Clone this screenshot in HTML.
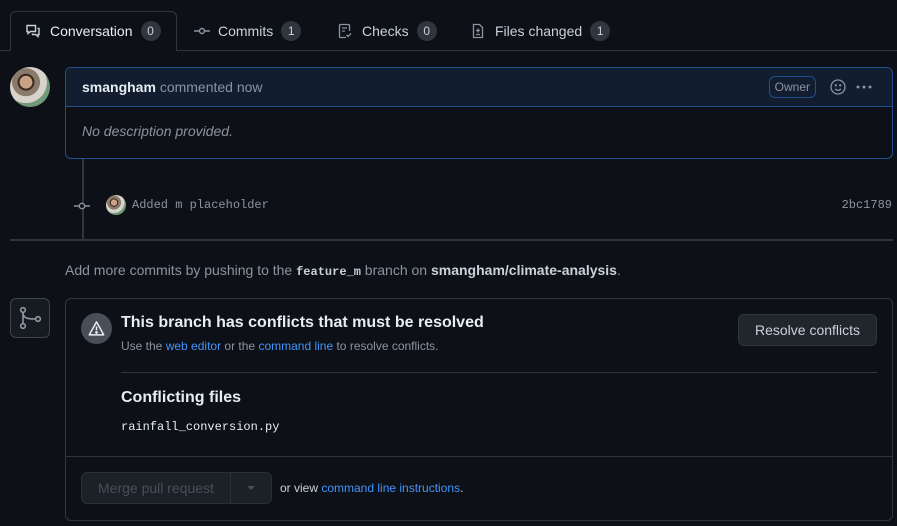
<!DOCTYPE html>
<html><head><meta charset="utf-8"><style>
*{margin:0;padding:0;box-sizing:border-box}
body{width:897px;height:526px;background:#0d1117;font-family:"Liberation Sans",sans-serif;color:#e6edf3;position:relative;overflow:hidden}
.a{position:absolute}
.tab{position:absolute;top:11px;height:40px;display:flex;align-items:center;font-size:14px;color:#c9d1d9}
.cnt{display:inline-block;background:#30363d;border-radius:10px;min-width:20px;height:20px;font-size:12px;line-height:20px;text-align:center;margin-left:8px;color:#c9d1d9}
.mono{font-family:"Liberation Mono",monospace}
a{color:#4493f8;text-decoration:none}
.av{border-radius:50%;background:radial-gradient(circle at 40% 38%,#c9a185 0 18%,#3a2a20 19% 24%,#8a7a6a 25% 40%,#d8d2cc 41% 60%,#6f9a7a 61%);overflow:hidden}
</style></head><body>
<!-- tabs -->
<div class="a" style="left:0;top:50px;width:897px;height:1px;background:#30363d"></div>
<div class="a" style="left:10px;top:11px;width:167px;height:40px;border:1px solid #30363d;border-bottom:none;border-radius:6px 6px 0 0;background:#0d1117"></div>
<div class="tab" style="left:25px;color:#e6edf3">
<svg width="16" height="16" viewBox="0 0 16 16" fill="none" stroke="#c9d1d9" stroke-width="1.4" style="margin-right:9px"><path d="M2 2.5h8.5v6H5.5L3 10.5V8.5H2z"/><path d="M12.5 5.5H14v6h-1v2l-2.5-2H7.5v-1"/></svg>Conversation<span class="cnt">0</span></div>
<div class="tab" style="left:194px"><svg width="16" height="16" viewBox="0 0 16 16" fill="none" stroke="#8b949e" stroke-width="1.4" style="margin-right:8px"><circle cx="8" cy="8" r="2.5"/><path d="M0 8h5.5M10.5 8H16"/></svg>Commits<span class="cnt">1</span></div>
<div class="tab" style="left:337px"><svg width="16" height="16" viewBox="0 0 16 16" fill="none" stroke="#8b949e" stroke-width="1.3" style="margin-right:9px"><path d="M9 14.5H3.5a1 1 0 0 1-1-1v-11a1 1 0 0 1 1-1h8a1 1 0 0 1 1 1V8M5 5h5M5 8h3"/><path d="M9.5 12l1.5 1.5 3-3"/></svg>Checks<span class="cnt">0</span></div>
<div class="tab" style="left:470px"><svg width="16" height="16" viewBox="0 0 16 16" fill="none" stroke="#8b949e" stroke-width="1.3" style="margin-right:9px"><path d="M3.5 1.5h6l3 3v10h-9z"/><path d="M8 5.5v4M6 7.5h4M6 11.5h4"/></svg>Files changed<span class="cnt">1</span></div>

<!-- comment -->
<div class="a av" style="left:10px;top:67px;width:40px;height:40px"></div>
<div class="a" style="left:82px;top:158px;width:2px;height:82px;background:#30363d"></div>
<div class="a" style="left:65px;top:67px;width:828px;height:92px;border:1px solid #1f4f8f;border-radius:6px;background:#0d1117;overflow:hidden">
 <div style="height:39px;background:#121d2f;border-bottom:1px solid #1f4f8f;display:flex;align-items:center;padding-left:16px;font-size:14px"><b style="color:#e6edf3">smangham</b>&nbsp;<span style="color:#8b949e">commented now</span>
 <span style="position:absolute;right:76px;top:8px;border:1px solid #1f4f8f;border-radius:6px;font-size:12px;color:#8b949e;padding:3px 5px">Owner</span>
 <svg class="a" style="right:46px;top:11px" width="16" height="16" viewBox="0 0 16 16" fill="none" stroke="#8b949e" stroke-width="1.3"><circle cx="8" cy="8" r="7"/><path d="M5.2 9.8a3.3 3.3 0 0 0 5.6 0"/><circle cx="5.8" cy="6.3" r=".5" fill="#8b949e"/><circle cx="10.2" cy="6.3" r=".5" fill="#8b949e"/></svg>
 <svg class="a" style="right:20px;top:17px" width="16" height="4" viewBox="0 0 16 4" fill="#8b949e"><circle cx="2" cy="2" r="1.5"/><circle cx="8" cy="2" r="1.5"/><circle cx="14" cy="2" r="1.5"/></svg></div>
 <div style="padding:16px;font-size:14px;font-style:italic;color:#8b949e">No description provided.</div>
</div>
<!-- commit -->
<svg class="a" style="left:74px;top:199px" width="16" height="14" viewBox="0 0 16 14" fill="none" stroke="#8b949e" stroke-width="1.4"><circle cx="8" cy="7" r="2.7" fill="#0d1117"/><path d="M0 7h5M11 7h5"/></svg>
<div class="a av" style="left:106px;top:195px;width:20px;height:20px"></div>
<div class="a mono" style="left:132px;top:198px;font-size:12px;color:#8b949e">Added m placeholder</div>
<div class="a mono" style="right:5px;top:198px;font-size:12px;color:#8b949e">2bc1789</div>
<div class="a" style="left:10px;top:239px;width:883px;height:2px;background:#30363d"></div>
<div class="a" style="left:65px;top:262px;font-size:14px;color:#8b949e">Add more commits by pushing to the <b class="mono" style="color:#c9d1d9;font-size:12px">feature_m</b> branch on <b style="color:#c9d1d9">smangham/climate-analysis</b>.</div>

<!-- merge -->
<div class="a" style="left:10px;top:298px;width:40px;height:40px;border:1px solid #3d444d;border-radius:6px;background:#161b22"></div>
<svg class="a" style="left:18px;top:306px" width="24" height="24" viewBox="0 0 24 24" fill="none" stroke="#9198a1" stroke-width="1.6"><circle cx="5" cy="4" r="2.3"/><circle cx="5" cy="20" r="2.3"/><circle cx="20" cy="13" r="2.3"/><path d="M5 6.3v11.4M5 6.5c0 5 3 6.5 12.7 6.5"/></svg>
<div class="a" style="left:65px;top:298px;width:828px;height:223px;border:1px solid #30363d;border-radius:6px"></div>
<div class="a" style="left:81px;top:313px;width:31px;height:31px;border-radius:50%;background:#484f58"></div>
<svg class="a" style="left:88px;top:320px" width="17" height="17" viewBox="0 0 16 16" fill="none" stroke="#e6edf3" stroke-width="1.4"><path d="M8 1.8L14.8 14H1.2z" stroke-linejoin="round"/><path d="M8 6v3.8"/><circle cx="8" cy="11.8" r=".6" fill="#e6edf3"/></svg>
<div class="a" style="left:121px;top:314px;font-size:16px;font-weight:bold">This branch has conflicts that must be resolved</div>
<div class="a" style="left:121px;top:339px;font-size:12px;color:#8b949e">Use the <a>web editor</a> or the <a>command line</a> to resolve conflicts.</div>
<div class="a" style="left:738px;top:314px;width:139px;height:32px;border:1px solid #30363d;border-radius:6px;background:#21262d;font-size:14px;line-height:30px;text-align:center;color:#c9d1d9">Resolve conflicts</div>
<div class="a" style="left:121px;top:372px;width:756px;height:1px;background:#30363d"></div>
<div class="a" style="left:121px;top:389px;font-size:16px;font-weight:bold">Conflicting files</div>
<div class="a mono" style="left:121px;top:420px;font-size:12px;color:#e6edf3">rainfall_conversion.py</div>
<div class="a" style="left:66px;top:456px;width:826px;height:1px;background:#30363d"></div>
<div class="a" style="left:81px;top:472px;width:191px;height:32px;border:1px solid #2a2f36;border-radius:6px;background:#1c2128"></div>
<div class="a" style="left:230px;top:473px;width:1px;height:30px;background:#2a2f36"></div>
<div class="a" style="left:98px;top:480px;font-size:14px;color:#484f58">Merge pull request</div>
<div class="a" style="left:247px;top:486px;width:0;height:0;border:4px solid transparent;border-top-color:#484f58"></div>
<div class="a" style="left:280px;top:481px;font-size:12px;color:#c9d1d9">or view <a>command line instructions</a>.</div>
</body></html>
